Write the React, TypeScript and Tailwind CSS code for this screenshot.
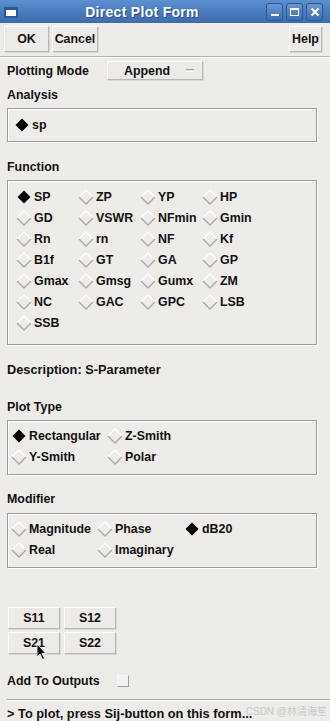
import React from "react";

const font = { fontFamily: '"Liberation Sans", Arial, sans-serif' };

function Diamond({ on }: { on?: boolean }) {
  if (on) {
    return (
      <svg width="16" height="16" viewBox="0 0 16 16" className="shrink-0">
        <path d="M8 1.5 L14.5 8 L8 14.5 L1.5 8 Z" fill="#000" />
      </svg>
    );
  }
  return (
    <svg width="16" height="16" viewBox="0 0 16 16" className="shrink-0">
      <path d="M1 8 L8 1 L15 8" fill="none" stroke="#ffffff" strokeWidth="1.3" />
      <path d="M1 8 L8 15 L15 8" fill="none" stroke="#a9a7a3" strokeWidth="1.3" />
    </svg>
  );
}

function Radio({ label, on, w }: { label: string; on?: boolean; w: string }) {
  return (
    <div className={`flex items-center h-[21px] ${w}`}>
      <Diamond on={on} />
      <span className="ml-[2px] whitespace-nowrap">{label}</span>
    </div>
  );
}

const raised =
  "bg-[#ecebe8] border border-t-white border-l-white border-r-[#b9b7b3] border-b-[#b9b7b3] shadow-[1px_1px_0_#d9d7d3]";

const groove =
  "border border-[#9d9b97] shadow-[inset_1px_1px_0_#ffffff,1px_1px_0_#ffffff]";

function TitleBtn({ children }: { children: React.ReactNode }) {
  return (
    <div className="w-[17px] h-[18px] rounded-[3px] border border-[#2d5896] bg-gradient-to-b from-[#6b98d4] to-[#3f6eb0] flex items-center justify-center">
      {children}
    </div>
  );
}

const functions = [
  ["SP", "ZP", "YP", "HP"],
  ["GD", "VSWR", "NFmin", "Gmin"],
  ["Rn", "rn", "NF", "Kf"],
  ["B1f", "GT", "GA", "GP"],
  ["Gmax", "Gmsg", "Gumx", "ZM"],
  ["NC", "GAC", "GPC", "LSB"],
  ["SSB"],
];

export default function App() {
  return (
    <div
      className="relative w-[330px] h-[721px] overflow-hidden bg-[#eeece9] text-[12.4px] font-bold text-[#111] leading-4 flex flex-col"
      style={font}
    >
      {/* title bar */}
      <div className="h-[23px] shrink-0 bg-gradient-to-b from-[#5e8fcf] via-[#4a7cbf] to-[#3d6cad] flex items-center pl-[4px] pr-[7px]">
        <div className="w-[14px] h-[11px] bg-white border-2 border-[#2d5896] border-t-[3px] rounded-[1px] mt-[1px]" />
        <div className="flex-1 text-center text-white text-[14px] tracking-[0.3px] [text-shadow:1px_1px_0_#2b4f85]">
          Direct Plot Form
        </div>
        <div className="flex gap-[3px]">
          <TitleBtn>
            <div className="w-[8px] h-[2px] bg-white mt-[7px]" />
          </TitleBtn>
          <TitleBtn>
            <div className="w-[9px] h-[8px] border border-white border-t-2" />
          </TitleBtn>
          <TitleBtn>
            <svg width="10" height="10" viewBox="0 0 10 10">
              <path d="M1.5 1.5 L8.5 8.5 M8.5 1.5 L1.5 8.5" stroke="#fff" strokeWidth="2" />
            </svg>
          </TitleBtn>
        </div>
      </div>

      {/* button bar */}
      <div className="h-[33px] shrink-0 flex items-start pt-[3px] pl-[4px] pr-[8px]">
        <div className={`${raised} w-[45px] h-[26px] flex items-center justify-center`}>OK</div>
        <div className={`${raised} w-[46px] h-[26px] ml-[3px] flex items-center justify-center`}>Cancel</div>
        <div className={`${raised} w-[33px] h-[26px] ml-auto flex items-center justify-center`}>Help</div>
      </div>
      <div className="h-[1px] bg-[#b3b1ad] shrink-0" />
      <div className="h-[1px] bg-white shrink-0" />

      <div className="pl-[7px] pr-[13px] flex flex-col">
        {/* plotting mode */}
        <div className="mt-[3px] h-[19px] flex items-center">
          <span className="w-[100px]">Plotting Mode</span>
          <div className={`${raised} w-[96px] h-[19px] flex items-center pl-[16px] pr-[8px]`}>
            <span className="flex-1">Append</span>
            <div className="w-[8px] h-[3px] border-t border-t-[#9d9b97] border-b border-b-white bg-[#e2e0dc]" />
          </div>
        </div>

        {/* analysis */}
        <div className="mt-[7px] h-4">Analysis</div>
        <div className={`mt-[5px] h-[34px] ${groove} flex items-center pl-[6px]`}>
          <Diamond on />
          <span className="ml-[2px]">sp</span>
        </div>

        {/* function */}
        <div className="mt-[17px] h-4">Function</div>
        <div className={`mt-[5px] h-[165px] ${groove} pl-[8px] pt-[5px]`}>
          {functions.map((row, i) => (
            <div key={i} className="flex">
              {row.map((f, j) => (
                <Radio key={f} label={f} on={i === 0 && j === 0} w="w-[62px]" />
              ))}
            </div>
          ))}
        </div>

        {/* description */}
        <div className="mt-[17px] h-4 text-[12.8px]">Description: S-Parameter</div>

        {/* plot type */}
        <div className="mt-[21px] h-4">Plot Type</div>
        <div className={`mt-[5px] h-[55px] ${groove} pl-[3px] pt-[4px]`}>
          <div className="flex">
            <Radio label="Rectangular" on w="w-[96px]" />
            <Radio label="Z-Smith" w="w-[96px]" />
          </div>
          <div className="flex">
            <Radio label="Y-Smith" w="w-[96px]" />
            <Radio label="Polar" w="w-[96px]" />
          </div>
        </div>

        {/* modifier */}
        <div className="mt-[16px] h-4">Modifier</div>
        <div className={`mt-[6px] h-[55px] ${groove} pl-[3px] pt-[4px]`}>
          <div className="flex">
            <Radio label="Magnitude" w="w-[86px]" />
            <Radio label="Phase" w="w-[87px]" />
            <Radio label="dB20" on w="w-[80px]" />
          </div>
          <div className="flex">
            <Radio label="Real" w="w-[86px]" />
            <Radio label="Imaginary" w="w-[87px]" />
          </div>
        </div>

        {/* S buttons */}
        <div className="mt-[39px] pl-[1px] flex flex-col gap-[3px]">
          <div className="flex gap-[4px]">
            <div className={`${raised} w-[52px] h-[22px] flex items-center justify-center`}>S11</div>
            <div className={`${raised} w-[52px] h-[22px] flex items-center justify-center`}>S12</div>
          </div>
          <div className="flex gap-[4px]">
            <div className={`${raised} relative w-[52px] h-[22px] flex items-center justify-center`}>
              S21
              <svg
                width="12"
                height="18"
                viewBox="0 0 12 18"
                className="absolute left-[27px] top-[10px]"
              >
                <path
                  d="M1 1 L1 14 L4 11 L6.5 16.5 L8.5 15.5 L6 10.5 L10 10.5 Z"
                  fill="#111"
                  stroke="#fff"
                  strokeWidth="0.8"
                />
              </svg>
            </div>
            <div className={`${raised} w-[52px] h-[22px] flex items-center justify-center`}>S22</div>
          </div>
        </div>

        {/* add to outputs */}
        <div className="mt-[19px] h-4 flex items-center">
          <span className="w-[110px]">Add To Outputs</span>
          <div className="w-[12px] h-[12px] bg-[#f3f2f0] border border-t-[#f8f8f8] border-l-[#f8f8f8] border-r-[#9d9b97] border-b-[#9d9b97]" />
        </div>
      </div>

      <div className="mt-[10px] ml-[7px] h-[1px] bg-[#a9a7a3] shrink-0" />
      <div className="ml-[7px] h-[1px] bg-white shrink-0" />
      <div className="mt-[5px] pl-[7px] pr-[76px] h-4 flex items-center">
        <span className="whitespace-nowrap text-[12.8px]">&gt; To plot, press Sij-button on this form...</span>
      </div>

      <div
        className="absolute right-[3px] bottom-[1px] text-[10px] font-normal text-[#c9c8c6]"
        style={{ fontFamily: '"Liberation Sans", "Noto Sans CJK SC", sans-serif' }}
      >
        CSDN @林清海笙
      </div>
    </div>
  );
}
